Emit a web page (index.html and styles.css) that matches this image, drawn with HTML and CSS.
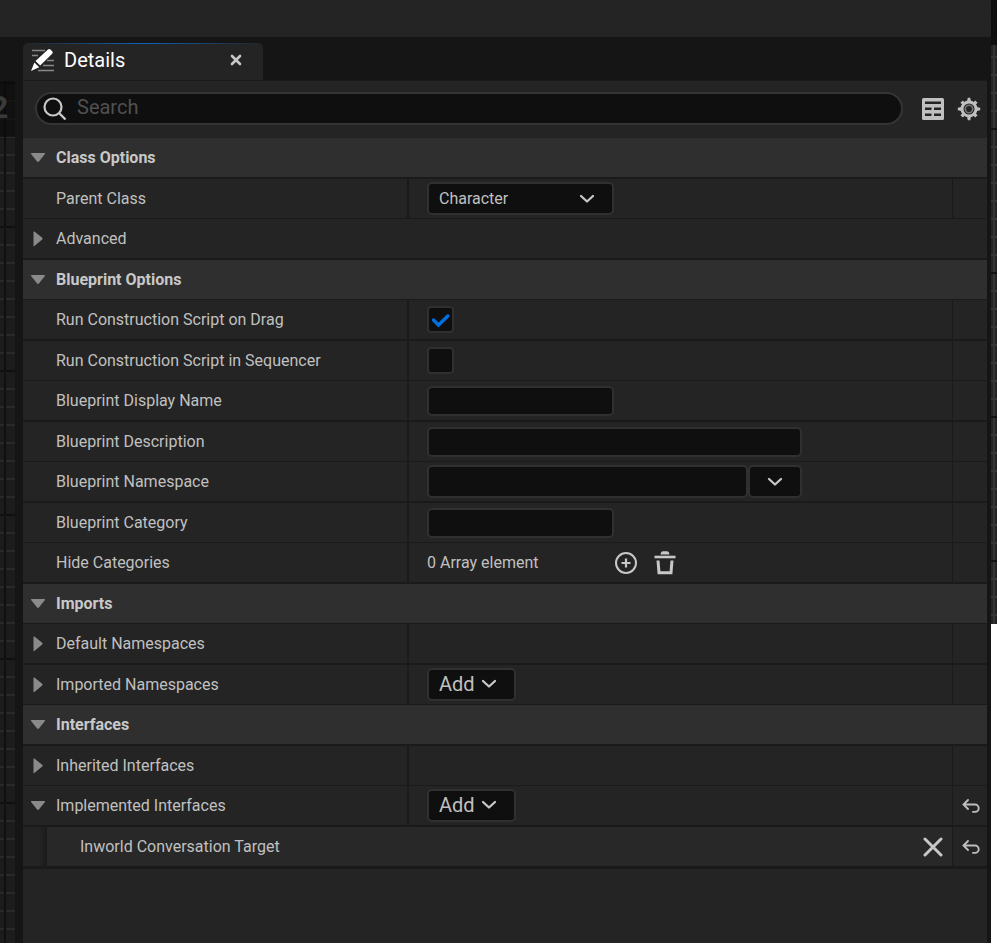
FILE: index.html
```html
<!DOCTYPE html>
<html lang="en">

<head>
    <meta charset="UTF-8">
    <title>Details</title>
    <link rel="stylesheet" href="styles.css">
</head>

<body>
    <!-- shared icon shapes -->
    <svg class="sprite" aria-hidden="true">
        <symbol id="open" viewBox="0 0 16 16"><path d="M1.500 3h13q1 0 .4.900l-6 7.600q-.9.900-1.800 0l-6-7.600q-.6-.9.400-.9z" fill="#8a8a8a"/></symbol>
        <symbol id="closed" viewBox="0 0 16 16"><path d="M3.500 1v13.500q0 1 .9.400l7.800-6.300q.9-.9 0-1.800l-7.800-6.200q-.9-.6-.9.400z" fill="#8a8a8a"/></symbol>
        <symbol id="chevron" viewBox="0 0 16 10"><path d="M2 2l6 5.500L14 2" fill="none" stroke="#c8c8c8" stroke-width="2.300" stroke-linecap="round" stroke-linejoin="round"/></symbol>
        <symbol id="reset" viewBox="0 0 18 16"><path d="M6 2L1.500 6.500 6 11M2 6.500h11a3.700 3.700 0 0 1 0 7.400h-2" fill="none" stroke="#bdbdbd" stroke-width="1.900" stroke-linecap="round"/></symbol>
    </svg>

    <div class="toolbar"></div>
    <div class="workspace">
        <div class="graph-left"><div class="graph-zoom">2</div></div>
        <main class="panel">
            <div class="tab-bar">
                <div class="tab">
                    <svg class="tab-icon" viewBox="0 0 24 24">
                        <path d="M2 2.500h13M2 7.500h6M17 12.500h7M13 17.500h11M8 22.500h16" stroke="#888" stroke-width="1.600"/>
                        <path d="M18 1.500q1.200-1.200 2.400 0l1.800 1.800q1.200 1.200 0 2.400L10.200 17.600l-4.700-4.700z" fill="#fff"/>
                        <path d="M4.400 14.400l4.800 4.800L1 23z" fill="#fff"/>
                    </svg>
                    <span class="tab-title">Details</span>
                    <button class="icon-button" aria-label="Close">
                        <svg width="12" height="12" viewBox="0 0 12 12"><path d="M2 2l8 8M10 2l-8 8" stroke="#c8c8c8" stroke-width="2.600" stroke-linecap="round"/></svg>
                    </button>
                </div>
            </div>

            <div class="search-bar">
                <div class="search">
                    <svg width="24" height="24" viewBox="0 0 24 24"><circle cx="10" cy="10" r="8.500" fill="none" stroke="#c8c8c8" stroke-width="2.200"/><path d="M16 16l6.500 6.500" stroke="#c8c8c8" stroke-width="2.400"/></svg>
                    <input class="search-input" type="text" placeholder="Search" aria-label="Search">
                </div>
                <button class="icon-button" aria-label="Property matrix">
                    <svg width="22" height="22" viewBox="0 0 22 22"><rect x="0" y="0" width="22" height="22" rx="1.500" fill="#c0c0c0"/><path d="M3 3.500h16v2.500H3zM3 9.500h6.500v2.500H3zM12 9.500h7v2.500h-7zM3 15.500h6.500v2.500H3zM12 15.500h7v2.500h-7z" fill="#242424"/></svg>
                </button>
                <button class="icon-button" aria-label="Settings">
                    <svg width="24" height="24" viewBox="0 0 24 24">
                        <circle cx="12" cy="12" r="7" fill="none" stroke="#c0c0c0" stroke-width="3"/>
                        <path d="M10.800 .800h2.400l1 4.700h-4.400zM10.800 23.200h2.400l1-4.700h-4.400zM.800 10.800v2.400l4.700 1v-4.400zM23.200 10.800v2.400l-4.700 1v-4.400z" fill="#c0c0c0"/>
                        <path d="M4.600 4.600l3 3M16.400 16.400l3 3M19.400 4.600l-3 3M7.600 16.400l-3 3" stroke="#c0c0c0" stroke-width="3.400"/>
                        <circle cx="12" cy="12" r="3.700" fill="none" stroke="#777" stroke-width="1.600"/>
                    </svg>
                </button>
            </div>

            <div class="rows">
                <div class="row header"><svg class="arrow"><use href="#open"/></svg><h2>Class Options</h2></div>
                <div class="row">
                    <label class="name" for="parent">Parent Class</label>
                    <div class="value">
                        <div class="select-box">
                            <select id="parent" class="field medium"><option>Character</option></select>
                            <svg class="chevron"><use href="#chevron"/></svg>
                        </div>
                    </div>
                    <div class="reset"></div>
                </div>
                <div class="row wide"><svg class="arrow"><use href="#closed"/></svg><span>Advanced</span></div>

                <div class="row header"><svg class="arrow"><use href="#open"/></svg><h2>Blueprint Options</h2></div>
                <div class="row">
                    <label class="name" for="drag">Run Construction Script on Drag</label>
                    <div class="value"><input id="drag" class="check" type="checkbox" checked></div>
                    <div class="reset"></div>
                </div>
                <div class="row">
                    <label class="name" for="sequencer">Run Construction Script in Sequencer</label>
                    <div class="value"><input id="sequencer" class="check" type="checkbox"></div>
                    <div class="reset"></div>
                </div>
                <div class="row">
                    <label class="name" for="display">Blueprint Display Name</label>
                    <div class="value"><input id="display" class="field short" type="text"></div>
                    <div class="reset"></div>
                </div>
                <div class="row">
                    <label class="name" for="description">Blueprint Description</label>
                    <div class="value"><input id="description" class="field long" type="text"></div>
                    <div class="reset"></div>
                </div>
                <div class="row">
                    <label class="name" for="namespace">Blueprint Namespace</label>
                    <div class="value">
                        <input id="namespace" class="field namespace" type="text">
                        <button class="field drop" aria-label="Choose namespace"><svg class="chevron"><use href="#chevron"/></svg></button>
                    </div>
                    <div class="reset"></div>
                </div>
                <div class="row">
                    <label class="name" for="category">Blueprint Category</label>
                    <div class="value"><input id="category" class="field short" type="text"></div>
                    <div class="reset"></div>
                </div>
                <div class="row">
                    <div class="name">Hide Categories</div>
                    <div class="value">
                        <span class="count">0 Array element</span>
                        <button class="icon-button" aria-label="Add element">
                            <svg width="24" height="24" viewBox="0 0 24 24"><circle cx="12" cy="12" r="10" fill="none" stroke="#c8c8c8" stroke-width="2"/><path d="M12 7.500v9M7.500 12h9" stroke="#c8c8c8" stroke-width="2.200"/></svg>
                        </button>
                        <button class="icon-button trash" aria-label="Remove all">
                            <svg width="22" height="24" viewBox="0 0 22 24"><path d="M6.500 3.500q.5-3.200 2.500-3.200h4q2 0 2.500 3.200z" fill="#c8c8c8"/><path d="M.500 6h21" stroke="#c8c8c8" stroke-width="2.600"/><path d="M4 9.500l1 12.200h12l1-12.200" fill="none" stroke="#c8c8c8" stroke-width="3"/></svg>
                        </button>
                    </div>
                    <div class="reset"></div>
                </div>

                <div class="row header"><svg class="arrow"><use href="#open"/></svg><h2>Imports</h2></div>
                <div class="row">
                    <div class="name"><svg class="arrow"><use href="#closed"/></svg>Default Namespaces</div>
                    <div class="value"></div>
                    <div class="reset"></div>
                </div>
                <div class="row">
                    <div class="name"><svg class="arrow"><use href="#closed"/></svg>Imported Namespaces</div>
                    <div class="value"><button class="field add">Add<svg class="chevron"><use href="#chevron"/></svg></button></div>
                    <div class="reset"></div>
                </div>

                <div class="row header"><svg class="arrow"><use href="#open"/></svg><h2>Interfaces</h2></div>
                <div class="row">
                    <div class="name"><svg class="arrow"><use href="#closed"/></svg>Inherited Interfaces</div>
                    <div class="value"></div>
                    <div class="reset"></div>
                </div>
                <div class="row">
                    <div class="name"><svg class="arrow"><use href="#open"/></svg>Implemented Interfaces</div>
                    <div class="value"><button class="field add">Add<svg class="chevron"><use href="#chevron"/></svg></button></div>
                    <div class="reset"><button class="icon-button" aria-label="Reset to default"><svg width="18" height="16"><use href="#reset"/></svg></button></div>
                </div>
                <div class="row child">
                    <div class="indent"></div>
                    <div class="interface">
                        <span>Inworld Conversation Target</span>
                        <button class="icon-button" aria-label="Remove interface">
                            <svg width="20" height="20" viewBox="0 0 20 20"><path d="M2 2l16 16M18 2L2 18" stroke="#c8c8c8" stroke-width="3" stroke-linecap="round"/></svg>
                        </button>
                    </div>
                    <div class="reset"><button class="icon-button" aria-label="Reset to default"><svg width="18" height="16"><use href="#reset"/></svg></button></div>
                </div>
            </div>
        </main>
    </div>
    <div class="graph-right"></div>
</body>

</html>
```
FILE: styles.css
```css
* {
    box-sizing: border-box;
}

body {
    background-color: #151515;
    color: #c0c0c0;
    display: grid;
    font-family: Roboto, sans-serif;
    font-size: 16px;
    grid-template-columns: 1fr 6px;
    grid-template-rows: 37px 1fr;
    margin: 0;
    min-height: 100vh;
}

.sprite {
    display: none;
}

svg {
    display: block;
    flex: none;
}

.toolbar {
    background-color: #242424;
}

.workspace {
    display: flex;
    grid-row: 2;
    padding-right: 4px;
}

/* blueprint graph showing on both sides of the panel */
.graph-left {
    background-color: #1c1c1c;
    background-image:
        linear-gradient(90deg, transparent 4px, #101010 4px, #101010 6px, transparent 6px),
        repeating-linear-gradient(transparent 0, transparent 1px, #101010 1px, #101010 3px, transparent 3px, transparent 144px),
        repeating-linear-gradient(transparent 0, transparent 1px, #292929 1px, #292929 3px, transparent 3px, transparent 18px);
    margin-right: 8px;
    margin-top: 44px;
    width: 15px;
}

.graph-zoom {
    background-color: rgba(8, 8, 8, 0.6);
    color: #3a3a3a;
    font-size: 32px;
    font-weight: bold;
    height: 56px;
    line-height: 52px;
    overflow: hidden;
    text-indent: -10px;
}

.graph-right {
    background-color: #242424;
    grid-column: 2;
    grid-row: 1 / 3;
    background-image:
        linear-gradient(rgba(8, 8, 8, 0.8) 45px, transparent 45px, transparent 624px, #ffffff 624px),
        repeating-linear-gradient(transparent 0, transparent 128px, #101010 128px, #101010 130px, transparent 130px, transparent 144px),
        linear-gradient(90deg, transparent 2px, #343434 2px, #343434 4px, transparent 4px),
        repeating-linear-gradient(transparent 0, transparent 2px, #343434 2px, #343434 4px, transparent 4px, transparent 18px);
}

.panel {
    background-color: #242424;
    flex: 1;
    min-width: 0;
}

.tab-bar {
    background-color: #151515;
    border-bottom: 1px solid #1a1a1a;
    padding-top: 6px;
}

.tab {
    align-items: center;
    background-color: #242424;
    background-image: linear-gradient(90deg, transparent, #0f62b8, transparent);
    background-repeat: no-repeat;
    background-size: 100% 1px;
    border-radius: 5px 5px 0 0;
    display: flex;
    height: 37px;
    padding: 0 21px 4px 7px;
    width: 240px;
}

.tab-icon {
    height: 24px;
    width: 24px;
}

.tab-title {
    color: #ffffff;
    flex: 1;
    font-size: 20px;
    margin-left: 10px;
}

.icon-button {
    background: none;
    border: 0;
    display: block;
    padding: 0;
}

.search-bar {
    align-items: center;
    background-color: #242424;
    display: flex;
    gap: 13px;
    height: 57px;
    padding: 0 6px 2px 12px;
}

.search {
    align-items: center;
    background-color: #0f0f0f;
    border: 2px solid #343434;
    border-radius: 17px;
    display: flex;
    flex: 1;
    height: 33px;
    margin-right: 6px;
    padding: 0 12px 0 6px;
}

.search-input {
    background: none;
    border: 0;
    color: #c0c0c0;
    flex: 1;
    font-family: Roboto, sans-serif;
    font-size: 20px;
    margin-bottom: 4px;
    outline: none;
    padding: 0 0 0 10px;
}

.search-input::placeholder {
    color: #505050;
}

.rows {
    background-color: #242424;
}

.row {
    border-bottom: 1px solid #1a1a1a;
    display: grid;
    grid-template-columns: 386px 1fr 35px;
    height: 40px;
}

.row:nth-child(odd) {
    border-bottom-width: 2px;
    height: 41px;
}

.header,
.wide {
    align-items: center;
    display: flex;
    padding-left: 7px;
}

.header {
    background-color: #2f2f2f;
}

.header h2 {
    color: #c8c8c8;
    font-size: 16px;
    margin: 0;
}

.arrow {
    height: 16px;
    margin-right: 10px;
    width: 16px;
}

.name {
    align-items: center;
    border-right: 2px solid #1a1a1a;
    display: flex;
    padding-left: 33px;
}

.name:has(.arrow) {
    padding-left: 7px;
}

.value {
    align-items: center;
    display: flex;
    padding-left: 18px;
}

.reset {
    align-items: center;
    border-left: 1px solid #1a1a1a;
    display: flex;
    justify-content: center;
    padding-left: 2px;
}

.field {
    background-color: #0f0f0f;
    border: 2px solid #303030;
    border-radius: 5px;
    color: #c0c0c0;
    font-family: Roboto, sans-serif;
    font-size: 16px;
    height: 33px;
}

.select-box {
    align-items: center;
    display: grid;
}

.select-box > * {
    grid-area: 1 / 1;
}

.select-box .chevron {
    justify-self: end;
    margin-right: 19px;
    pointer-events: none;
}

.medium {
    appearance: none;
    padding: 0 10px;
    width: 187px;
}

.short {
    height: 30px;
    width: 187px;
}

.long {
    height: 30px;
    width: 375px;
}

.namespace {
    width: 321px;
}

.drop {
    align-items: center;
    display: flex;
    justify-content: center;
    width: 54px;
}

.add {
    align-items: center;
    display: flex;
    font-size: 20px;
    gap: 6px;
    padding: 0 10px 2px;
    width: 89px;
}

.chevron {
    height: 10px;
    width: 16px;
}

.check {
    appearance: none;
    background-color: #0f0f0f;
    border: 2px solid #303030;
    border-radius: 4px;
    height: 27px;
    margin: 0;
    width: 27px;
}

.check:checked {
    background-image: url("data:image/svg+xml,%3Csvg xmlns='http://www.w3.org/2000/svg' viewBox='0 0 23 23'%3E%3Cpath d='M4.500 12l5 5L18.800 8' fill='none' stroke='%230070e0' stroke-width='3.400' stroke-linecap='round'/%3E%3C/svg%3E");
}

.count {
    width: 187px;
}

.trash {
    margin-left: 16px;
}

.child {
    border-bottom-width: 3px;
    grid-template-columns: 24px 1fr 35px;
    height: 42px;
}

.indent {
    background-image: linear-gradient(90deg, transparent 16px, #1a1a1a);
}

.interface {
    align-items: center;
    background-color: #282828;
    display: flex;
    justify-content: space-between;
    padding: 0 9px 0 33px;
}
```
